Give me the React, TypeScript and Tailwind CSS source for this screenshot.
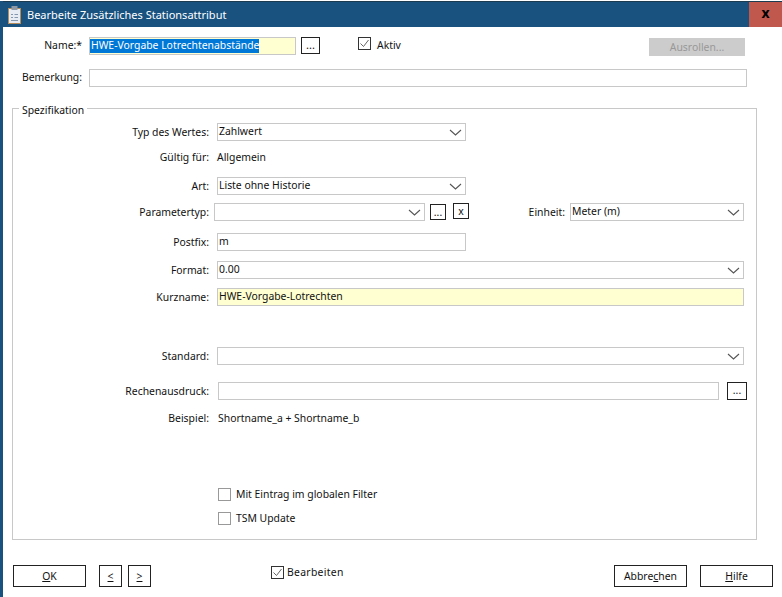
function Chevron() {
  return (
    <svg width="13" height="7" viewBox="0 0 13 7" className="shrink-0">
      <path d="M1 1l5.5 5L12 1" fill="none" stroke="#555" strokeWidth="1.1" />
    </svg>
  )
}

function Select({ value, className }: { value?: string; className: string }) {
  return (
    <div className={`flex h-[18px] shrink-0 items-center justify-between border border-[#c8c8c8] bg-white pr-[3px] ${className}`}>
      <span className="pb-[2px] pl-px">{value}</span>
      <Chevron />
    </div>
  )
}

function Check({ checked }: { checked?: boolean }) {
  return (
    <span className={`flex h-[13px] w-[13px] shrink-0 items-center justify-center border bg-white ${checked ? 'border-[#333]' : 'border-[#999]'}`}>
      {checked ? (
        <svg width="11" height="11" viewBox="0 0 11 11">
          <path d="M1.5 5.5l3 3 5-6.5" fill="none" stroke="#666" strokeWidth="1" />
        </svg>
      ) : null}
    </span>
  )
}

function Btn({ children, className }: { children: React.ReactNode; className: string }) {
  return (
    <div className={`flex shrink-0 items-center justify-center border border-[#222] bg-white text-[#111] ${className}`}>
      {children}
    </div>
  )
}

// one form row inside the group box, label is right aligned at x=209
function Row({ label, className, children }: { label: string; className: string; children: React.ReactNode }) {
  return (
    <div className={`flex h-[18px] items-center ${className}`}>
      <div className="w-[196px] shrink-0 text-right">{label}</div>
      {children}
    </div>
  )
}

export default function App() {
  return (
    <div className="h-[597px] w-[782px] overflow-hidden bg-white font-['Noto_Sans',sans-serif] text-[10.4px] leading-none text-[#111]">
      <div className="h-px bg-white" />
      <div className="flex h-[597px] flex-col border-l-[3px] border-[#19527f]">
        <div className="flex h-[26px] shrink-0 items-center justify-between border-t border-[#1c3a50] bg-[#19527f] text-white">
          <div className="flex items-center">
            <svg width="13" height="18" viewBox="0 0 13 18" className="ml-[5px] mr-px">
              <rect x="0.5" y="2.5" width="12" height="15" fill="#e6ebf4" stroke="#b48c5c" />
              <rect x="3.5" y="0" width="6" height="4" fill="#8e99a5" />
              <path d="M3 8.5h2M6.5 8.5h3.5M3 11.5h2M6.5 11.5h3.5M3 14.5h7" stroke="#8497ad" />
            </svg>
            <span className="ml-[5px] text-[11px]">Bearbeite Zusätzliches Stationsattribut</span>
          </div>
          <div className="flex h-[25px] w-[33px] items-center justify-center bg-[#c0584e] pb-[4px] text-[14px] font-bold text-black">x</div>
        </div>

        <div className="mt-[10px] flex h-[18px] items-start">
          <div className="w-[79px] pt-[3px] text-right">Name:*</div>
          <div className="ml-[7px] flex h-[18px] w-[207px] items-center border border-[#c8c8c8] bg-[#ffffd2]">
            <span className="bg-[#0078d7] pb-[3px] pl-px pt-[1px] text-white">HWE-Vorgabe Lotrechtenabstände</span>
          </div>
          <Btn className="ml-[5px] h-[17px] w-[19px] items-end pb-[3px] text-[11px]">...</Btn>
          <div className="ml-[38px]"><Check checked /></div>
          <span className="ml-[6px] w-[30px] pt-[3px]">Aktiv</span>
          <div className="ml-[242px] mt-px flex h-[18px] w-[96px] shrink-0 items-center justify-center bg-[#cccccc] text-[#989898]">Ausrollen...</div>
        </div>

        <div className="mt-[14px] flex h-[18px] items-center">
          <div className="w-[79px] pb-[2px] text-right">Bemerkung:</div>
          <div className="ml-[7px] h-[18px] w-[658px] border border-[#c8c8c8]" />
        </div>

        <div className="relative ml-[9px] mt-[21px] h-[432px] w-[745px] border border-[#c8c8c8]">
          <div className="absolute left-[6px] top-[-5px] bg-white px-[3px] leading-[12px]">Spezifikation</div>

          <Row label="Typ des Wertes:" className="mt-[14px]">
            <Select value="Zahlwert" className="ml-[8px] w-[249px]" />
          </Row>
          <Row label="Gültig für:" className="mt-[7px]">
            <span className="ml-[8px]">Allgemein</span>
          </Row>
          <Row label="Art:" className="mt-[11px]">
            <Select value="Liste ohne Historie" className="ml-[8px] w-[249px]" />
          </Row>
          <Row label="Parametertyp:" className="mt-[8px]">
            <Select className="ml-[5px] w-[211px]" />
            <Btn className="ml-[5px] h-[16px] w-[16px] items-end pb-[2px]">...</Btn>
            <Btn className="mb-[2px] ml-[7px] h-[16px] w-[16px]">x</Btn>
            <span className="ml-[58px] w-[38px] shrink-0 text-right">Einheit:</span>
            <Select value="Meter (m)" className="ml-[5px] w-[174px]" />
          </Row>
          <Row label="Postfix:" className="mt-[12px]">
            <div className="ml-[8px] flex h-[18px] w-[249px] items-center border border-[#c8c8c8] pb-[2px] pl-px">m</div>
          </Row>
          <Row label="Format:" className="mt-[10px]">
            <Select value="0.00" className="ml-[8px] w-[527px]" />
          </Row>
          <Row label="Kurzname:" className="mt-[9px]">
            <div className="ml-[8px] flex h-[18px] w-[527px] items-center border border-[#c8c8c8] bg-[#ffffd2] pb-[2px] pl-px">HWE-Vorgabe-Lotrechten</div>
          </Row>
          <Row label="Standard:" className="mt-[41px]">
            <Select className="ml-[8px] w-[527px]" />
          </Row>
          <Row label="Rechenausdruck:" className="mt-[17px]">
            <div className="ml-[9px] h-[18px] w-[501px] shrink-0 border border-[#c8c8c8]" />
            <Btn className="ml-[8px] h-[18px] w-[20px] items-end pb-[4px]">...</Btn>
          </Row>
          <Row label="Beispiel:" className="mt-[9px]">
            <span className="ml-[9px]">Shortname_a + Shortname_b</span>
          </Row>
          <div className="ml-[205px] mt-[61px] flex items-center">
            <Check />
            <span className="ml-[5px]">Mit Eintrag im globalen Filter</span>
          </div>
          <div className="ml-[205px] mt-[11px] flex items-center">
            <Check />
            <span className="ml-[5px]">TSM Update</span>
          </div>
        </div>

        <div className="mt-[25px] flex h-[22px] items-start">
          <Btn className="ml-[10px] h-[22px] w-[73px]"><u>O</u>K</Btn>
          <Btn className="ml-[13px] h-[22px] w-[23px]"><u>&lt;</u></Btn>
          <Btn className="ml-[6px] h-[22px] w-[23px]"><u>&gt;</u></Btn>
          <div className="ml-[120px] mt-px flex w-[100px] shrink-0 items-center">
            <Check checked />
            <span className="ml-[3px] tracking-[0.3px]">Bearbeiten</span>
          </div>
          <Btn className="ml-[243px] h-[22px] w-[73px]">Abbre<u>c</u>hen</Btn>
          <Btn className="ml-[13px] h-[22px] w-[73px]"><u>H</u>ilfe</Btn>
        </div>
      </div>
    </div>
  )
}
